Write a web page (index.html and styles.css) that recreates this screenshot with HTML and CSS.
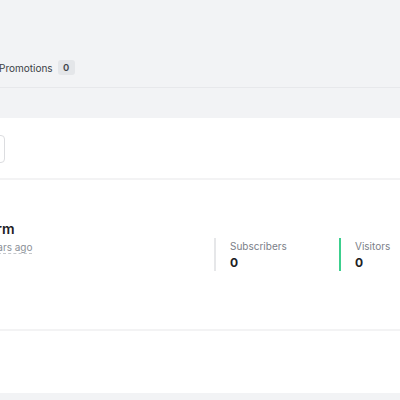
FILE: index.html
```html
<!DOCTYPE html>
<html>
<head>
<meta charset="utf-8">
<link rel="stylesheet" href="styles.css">
</head>
<body>
<div class="page">
  <div class="tabs">
    <div class="tab">
      <span class="tab-label">Promotions</span>
      <span class="badge">0</span>
    </div>
  </div>
  <div class="gap"></div>
  <div class="card">
    <div class="toolbar">
      <button class="btn" type="button">Filter</button>
    </div>
    <div class="item">
      <div class="info">
        <div class="name">Form</div>
        <div class="date"><span class="ago">2 years ago</span></div>
      </div>
      <div class="stat">
        <div class="stat-label">Subscribers</div>
        <div class="stat-value">0</div>
      </div>
      <div class="stat stat-green">
        <div class="stat-label">Visitors</div>
        <div class="stat-value">0</div>
      </div>
    </div>
    <div class="item item-empty"></div>
  </div>
</div>
</body>
</html>
```

FILE: styles.css
```css
html, body {
  margin: 0;
  padding: 0;
}
body {
  background: #f2f3f5;
  font-family: Inter, "Noto Sans", sans-serif;
  color: #1f2328;
  width: 400px;
  height: 400px;
  overflow: hidden;
}
.page {
  width: 400px;
}
.tabs {
  height: 87px;
  border-bottom: 1px solid #e7e8eb;
  display: flex;
  align-items: flex-start;
  margin-left: -1px;
}
.tab {
  margin-top: 60px;
  display: flex;
  align-items: center;
  gap: 5px;
  height: 15px;
}
.tab-label {
  font-size: 10px;
  color: #3a3f45;
}
.badge {
  display: inline-flex;
  align-items: center;
  justify-content: center;
  width: 17px;
  height: 15px;
  border-radius: 3px;
  background: #e4e6e9;
  font-size: 9.5px;
  font-weight: 600;
  color: #40454b;
}
.gap {
  height: 30px;
}
.card {
  background: #ffffff;
  height: 275px;
}
.toolbar {
  height: 62px;
  border-bottom: 2px solid #f3f3f4;
  box-sizing: border-box;
  display: flex;
  align-items: flex-start;
  padding-top: 17px;
}
.btn {
  margin-left: -61px;
  width: 66px;
  height: 28px;
  border: 1px solid #dcdde0;
  border-radius: 4px;
  background: #fff;
  font-family: inherit;
  font-size: 11px;
}
.item {
  height: 151px;
  box-sizing: border-box;
  border-bottom: 2px solid #f3f3f4;
  display: flex;
  align-items: flex-start;
  padding-top: 40px;
}
.item-empty {
  height: 61px;
  border-bottom: none;
}
.info {
  width: 234px;
  margin-left: -20px;
  flex-shrink: 0;
}
.name {
  font-size: 14px;
  font-weight: 600;
  line-height: 18px;
  color: #1d2024;
}
.date {
  margin-top: 2px;
  margin-left: -3px;
  font-size: 10px;
  line-height: 14px;
  color: #8b9097;
}
.ago {
  border-bottom: 1px dashed #c5c8cc;
}
.stat {
  flex-shrink: 0;
  width: 109px;
  margin-top: 18px;
  height: 33px;
  border-left: 2px solid #e6e7e9;
  padding-left: 14px;
  box-sizing: content-box;
}
.stat-green {
  border-left-color: #3ccf8e;
}
.stat-label {
  font-size: 10px;
  line-height: 14px;
  color: #7b8088;
  margin-top: 1px;
}
.stat-value {
  font-size: 12px;
  font-weight: 700;
  line-height: 16px;
  margin-top: 2px;
  color: #1d2024;
}
```
